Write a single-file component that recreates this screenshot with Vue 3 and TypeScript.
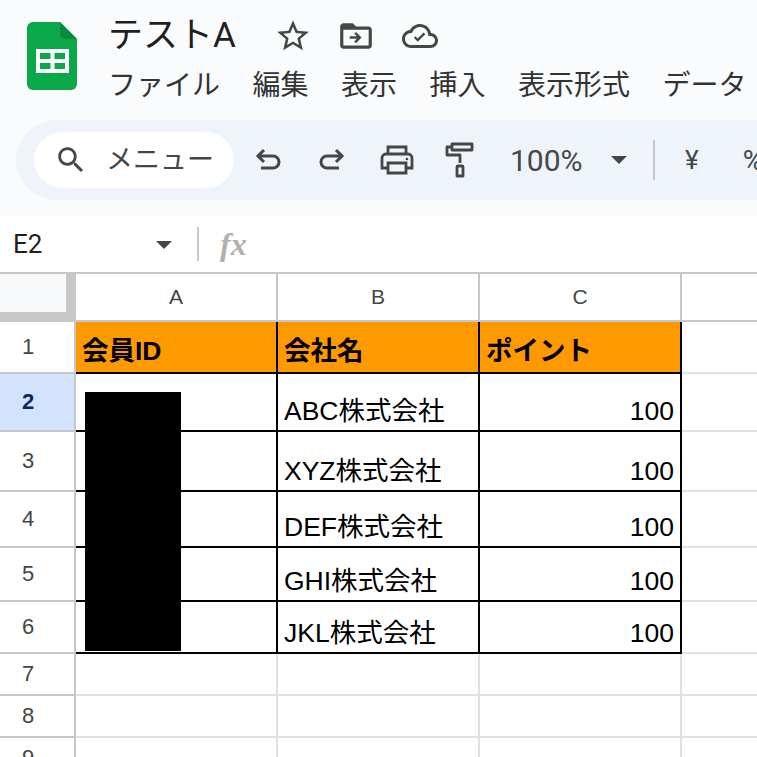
<script setup lang="ts">
const menus = ['ファイル', '編集', '表示', '挿入', '表示形式', 'データ']

const columns = ['A', 'B', 'C']

const rows = [
  { id: 2, name: 'ABC株式会社', height: 58 },
  { id: 3, name: 'XYZ株式会社', height: 60 },
  { id: 4, name: 'DEF株式会社', height: 56 },
  { id: 5, name: 'GHI株式会社', height: 54 },
  { id: 6, name: 'JKL株式会社', height: 52 },
]
</script>

<template>
  <div class="page">
    <header class="top">
      <div class="title-area">
        <svg class="logo" width="50" height="68" viewBox="0 0 50 68">
          <path d="M6 0H33L50 17V62a6 6 0 0 1-6 6H6a6 6 0 0 1-6-6V6a6 6 0 0 1 6-6z" fill="#0ba84a" />
          <path d="M33 0L50 17H38a5 5 0 0 1-5-5z" fill="#0a8a3a" />
          <path d="M9 27H42V51H9zM13 31V37H23.500V31zM27.500 31V37H38V31zM13 41V47H23.500V41zM27.500 41V47H38V41z" fill="#fff" fill-rule="evenodd" />
        </svg>
        <div class="title-text">
          <div class="title-row">
            <span class="doc-name">テストA</span>
            <svg class="star" width="38" height="38" viewBox="0 0 24 24" fill="#444746">
              <path d="M22 9.240l-7.190-.62L12 2 9.190 8.630 2 9.240l5.460 4.730L5.820 21 12 17.270 18.180 21l-1.630-7.030L22 9.240zM12 15.400l-3.760 2.270 1-4.280-3.320-2.880 4.380-.38L12 6.100l1.710 4.040 4.380.38-3.320 2.880 1 4.280L12 15.400z" />
            </svg>
            <svg class="move" width="38" height="38" viewBox="0 0 24 24" fill="#444746">
              <path d="M20 6h-8l-2-2H4c-1.100 0-2 .9-2 2v12c0 1.100.9 2 2 2h16c1.100 0 2-.9 2-2V8c0-1.100-.9-2-2-2zm0 12H4V8h16v10z" />
              <path d="M12 9.500l-1.100 1.100 1.600 1.600H8v1.600h4.500l-1.600 1.600 1.100 1.100 3.500-3.500z" />
            </svg>
            <svg class="cloud" width="36" height="36" viewBox="0 0 24 24" fill="#444746">
              <path d="M19.350 10.040C18.670 6.590 15.640 4 12 4 9.110 4 6.600 5.640 5.350 8.040 2.340 8.360 0 10.910 0 14c0 3.310 2.690 6 6 6h13c2.760 0 5-2.240 5-5 0-2.640-2.050-4.780-4.650-4.960zM19 18H6c-2.210 0-4-1.790-4-4 0-2.050 1.530-3.760 3.560-3.970l1.070-.11.5-.95C8.080 7.140 9.940 6 12 6c2.620 0 4.880 1.860 5.390 4.430l.3 1.500 1.530.11c1.560.1 2.780 1.410 2.780 2.960 0 1.650-1.350 3-3 3z" />
              <path d="M10.500 15.800l-2.600-2.600 1.100-1.100 1.500 1.500 3.900-3.900 1.100 1.100z" />
            </svg>
          </div>
          <nav class="menu-row">
            <span v-for="item in menus" :key="item" class="menu-item">{{ item }}</span>
          </nav>
        </div>
      </div>

      <div class="toolbar">
        <div class="search">
          <svg width="34" height="34" viewBox="0 0 24 24" fill="#444746">
            <path d="M15.500 14h-.79l-.28-.27C15.410 12.590 16 11.110 16 9.500 16 5.910 13.090 3 9.500 3S3 5.910 3 9.500 5.910 16 9.500 16c1.610 0 3.090-.59 4.230-1.570l.27.28v.79l5 4.990L20.490 19l-4.990-5zm-6 0C7.010 14 5 11.990 5 9.500S7.010 5 9.500 5 14 7.010 14 9.500 11.990 14 9.500 14z" />
          </svg>
          <span class="search-label">メニュー</span>
        </div>
        <svg class="tool undo" width="26" height="24" viewBox="0 0 26 24" fill="none" stroke="#444746" stroke-width="3">
          <path d="M9 2L3 8l6 6M3 8h15a5.500 5.500 0 0 1 0 12H6" />
        </svg>
        <svg class="tool redo" width="26" height="24" viewBox="0 0 26 24" fill="none" stroke="#444746" stroke-width="3">
          <path d="M17 2l6 6-6 6M23 8H8a5.500 5.500 0 0 0 0 12h12" />
        </svg>
        <svg class="tool print" width="34" height="30" viewBox="0 0 34 30" fill="none" stroke="#444746" stroke-width="2.800">
          <path d="M8 9V2h18v7M8 23H2V13a4 4 0 0 1 4-4h22a4 4 0 0 1 4 4v10h-6M8 18h18v10H8z" />
          <circle cx="27" cy="14" r="1.300" fill="#444746" stroke="none" />
        </svg>
        <svg class="tool roller" width="30" height="36" viewBox="0 0 30 36" fill="none" stroke="#444746" stroke-width="2.800">
          <path d="M7 2h20v6H7zM7 5H2v8h13v8M12 25a1 1 0 0 1 1-1h4a1 1 0 0 1 1 1v9h-6z" stroke-linejoin="round" />
        </svg>
        <span class="zoom">100%</span>
        <span class="caret"></span>
        <span class="divider"></span>
        <span class="currency">¥</span>
        <span class="percent">%</span>
      </div>
    </header>

    <div class="formula-bar">
      <span class="cell-ref">E2</span>
      <span class="caret ref-caret"></span>
      <span class="divider fx-divider"></span>
      <span class="fx">fx</span>
    </div>

    <div class="sheet">
      <div class="corner"><div class="corner-inner"></div></div>
      <div v-for="col in columns" :key="col" class="col-head">{{ col }}</div>
      <div class="col-head col-rest"></div>

      <div class="row-head">1</div>
      <div class="cell head-cell">会員ID</div>
      <div class="cell head-cell">会社名</div>
      <div class="cell head-cell">ポイント</div>
      <div class="blank"></div>

      <template v-for="row in rows" :key="row.id">
        <div class="row-head" :class="{ active: row.id === 2 }" :style="{ height: row.height + 'px' }">{{ row.id }}</div>
        <div class="cell"></div>
        <div class="cell">{{ row.name }}</div>
        <div class="cell num">100</div>
        <div class="blank"></div>
      </template>

      <template v-for="n in [7, 8, 9]" :key="n">
        <div class="row-head low">{{ n }}</div>
        <div class="blank low"></div>
        <div class="blank low"></div>
        <div class="blank low"></div>
        <div class="blank"></div>
      </template>

      <div class="redaction"></div>
    </div>
  </div>
</template>

<style scoped>
.page {
  width: 757px;
  height: 757px;
  overflow: hidden;
  background: #fff;
  font-family: Roboto, "Noto Sans CJK JP", sans-serif;
  color: #444746;
}

.top {
  height: 216px;
  background: #f9fbfd;
  overflow: hidden;
}

.title-area {
  display: flex;
  height: 120px;
  padding: 22px 0 0 27px;
  box-sizing: border-box;
}

.logo {
  flex: none;
}

.title-text {
  margin-left: 31px;
  margin-top: -10px;
  min-width: 0;
  white-space: nowrap;
}

.title-row {
  display: flex;
  align-items: center;
  height: 48px;
}

.doc-name {
  font-size: 35px;
  line-height: 48px;
  color: #1f1f1f;
  width: 128px;
  flex: none;
}

.star {
  margin-left: 38px;
}

.move {
  margin-left: 25px;
}

.cloud {
  margin-left: 27px;
}

.menu-row {
  display: flex;
  gap: 32.5px;
  margin-top: 7px;
  font-size: 28px;
  line-height: 38px;
  color: #333;
}

.menu-item {
  flex: none;
}

.toolbar {
  display: flex;
  align-items: center;
  height: 80px;
  margin-left: 16px;
  padding-left: 18px;
  background: #eff3fa;
  border-radius: 40px 0 0 40px;
  white-space: nowrap;
}

.search {
  display: flex;
  align-items: center;
  flex: none;
  width: 200px;
  height: 56px;
  box-sizing: border-box;
  padding-left: 20px;
  background: #fff;
  border-radius: 28px;
}

.search-label {
  margin: 0 0 5px 18px;
  font-size: 27px;
  color: #444746;
}

.tool {
  flex: none;
}

.undo {
  margin-left: 21px;
}

.redo {
  margin-left: 38px;
}

.print {
  margin-left: 35px;
}

.roller {
  margin-left: 31px;
}

.zoom {
  flex: none;
  width: 74px;
  margin-left: 35px;
  font-size: 30px;
}

.caret {
  flex: none;
  width: 0;
  height: 0;
  border-left: 8px solid transparent;
  border-right: 8px solid transparent;
  border-top: 8px solid #444746;
}

.toolbar .caret {
  margin-left: 27px;
}

.divider {
  flex: none;
  width: 2px;
  height: 40px;
  background: #c7c7c7;
}

.toolbar .divider {
  margin-left: 26px;
}

.currency {
  margin-left: 30px;
  font-size: 26px;
}

.percent {
  margin-left: 44px;
  font-size: 28px;
}

.formula-bar {
  display: flex;
  align-items: center;
  height: 56px;
  padding-left: 13px;
  background: #fff;
  border-bottom: 2px solid #c7c7c7;
}

.cell-ref {
  width: 143px;
  flex: none;
  font-size: 26px;
  color: #1f1f1f;
}

.ref-caret {
  margin-top: 2px;
}

.fx-divider {
  height: 34px;
  margin-left: 25px;
}

.fx {
  margin-left: 21px;
  font-family: "Liberation Serif", serif;
  font-style: italic;
  font-weight: 700;
  font-size: 32px;
  color: #b0b0b0;
}

.sheet {
  position: relative;
  display: grid;
  grid-template-columns: 76px 202px 202px 202px 75px;
  font-family: "Liberation Sans", "Noto Sans CJK JP", sans-serif;
  color: #000;
}

.corner {
  height: 48px;
  background: #c7c7c7;
}

.corner-inner {
  width: 66px;
  height: 38px;
  background: #f8f9fa;
}

.col-head {
  display: flex;
  align-items: center;
  justify-content: center;
  height: 48px;
  box-sizing: border-box;
  border-right: 2px solid #c7c7c7;
  border-bottom: 2px solid #c7c7c7;
  font-size: 21px;
  color: #444746;
}

.col-rest {
  border-right: none;
}

.row-head {
  display: flex;
  align-items: center;
  justify-content: center;
  height: 52px;
  box-sizing: border-box;
  padding-right: 18px;
  border-right: 2px solid #c7c7c7;
  border-bottom: 2px solid #c7c7c7;
  font-size: 22px;
  color: #444746;
}

.row-head.active {
  background: #d3e3fd;
  color: #0b2a5c;
  font-weight: 700;
}

.row-head.low {
  height: 42px;
}

.cell {
  display: flex;
  align-items: flex-end;
  box-sizing: border-box;
  padding: 0 6px 3px 6px;
  border-right: 2px solid #000;
  border-bottom: 2px solid #000;
  font-size: 26.5px;
  line-height: 32px;
  white-space: nowrap;
}

.head-cell {
  padding-bottom: 5px;
  background: #ff9900;
  font-weight: 700;
}

.num {
  justify-content: flex-end;
}

.blank {
  box-sizing: border-box;
  border-bottom: 2px solid #e1e1e1;
}

.blank.low {
  border-right: 2px solid #e1e1e1;
}

.redaction {
  position: absolute;
  left: 85px;
  top: 118px;
  width: 96px;
  height: 259px;
  background: #000;
}
</style>

<style>
html,
body {
  margin: 0;
  overflow: hidden;
}
</style>
